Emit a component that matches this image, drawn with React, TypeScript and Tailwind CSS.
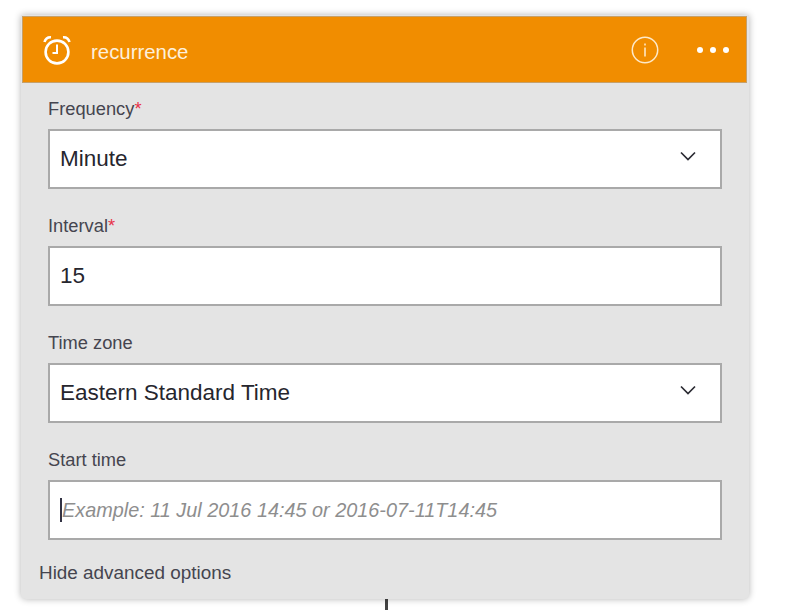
const ChevronDown = () => (
  <svg width="16" height="10" viewBox="0 0 16 10" fill="none" className="mr-[24px] mb-[6px]">
    <path d="M1 1.5 L8 8.5 L15 1.5" stroke="#2b2b33" strokeWidth="1.7" />
  </svg>
);

const Label = ({ text, required }: { text: string; required?: boolean }) => (
  <div className="h-[24px] text-[18.3px] leading-[24px] text-[#45454f]">
    {text}
    {required && <span className="text-[#e8334a]">*</span>}
  </div>
);

const fields = [
  { label: 'Frequency', required: true, value: 'Minute', select: true },
  { label: 'Interval', required: true, value: '15', select: false },
  { label: 'Time zone', required: false, value: 'Eastern Standard Time', select: true },
];

export default function App() {
  return (
    <div className="relative h-[610px] w-[794px] overflow-hidden bg-white font-['Liberation_Sans',sans-serif]">
      <div className="absolute left-[385px] top-[596px] h-[14px] w-[3px] bg-[#444444]" />
      <div className="absolute left-[21px] top-[15px] h-[584px] w-[728px] rounded-b-[5px] bg-[#e4e4e4] pt-[1px] shadow-[0_0_7px_rgba(0,0,0,0.3)]">
        <div className="ml-[1px] mr-[2px] flex h-[67px] items-center border border-[#c5a06b] bg-[#f18d00] pl-[19px] pr-[17px]">
          <svg width="30" height="32" viewBox="0 0 30 32" fill="none" stroke="white">
            <circle cx="15" cy="18" r="11.4" strokeWidth="2.6" />
            <path d="M15 10.5 V19 H10.5" strokeWidth="2" />
            <path d="M2.5 8 C3.5 4.5 6 3 9 3.2" strokeWidth="2.6" />
            <path d="M27.5 8 C26.5 4.5 24 3 21 3.2" strokeWidth="2.6" />
          </svg>
          <span className="ml-[19px] mt-[5px] text-[20.4px] text-[#fdf0dc]">recurrence</span>
          <svg width="28" height="28" viewBox="0 0 28 28" fill="none" className="ml-auto mt-[1px]">
            <circle cx="14" cy="14" r="12.7" stroke="#fde9c9" strokeWidth="1.5" />
            <rect x="13.1" y="11.5" width="1.8" height="9" fill="#fcdcae" />
            <rect x="13.1" y="7.5" width="1.8" height="2" fill="#fcdcae" />
          </svg>
          <div className="ml-[38px] mt-[1px] flex gap-[7px]">
            <span className="h-[6px] w-[6px] rounded-full bg-white" />
            <span className="h-[6px] w-[6px] rounded-full bg-white" />
            <span className="h-[6px] w-[6px] rounded-full bg-white" />
          </div>
        </div>
        <div className="flex flex-col pl-[27px] pr-[27px] pt-[14px]">
          {fields.map((f) => (
            <div key={f.label} className="h-[117px]">
              <Label text={f.label} required={f.required} />
              <div className="mt-[8px] flex h-[60px] items-center justify-between border-2 border-[#a9a9a9] bg-white pl-[10px] text-[22.5px] text-[#26262e]">
                {f.value}
                {f.select && <ChevronDown />}
              </div>
            </div>
          ))}
          <Label text="Start time" />
          <div className="mt-[8px] flex h-[60px] items-center border-2 border-[#a9a9a9] bg-white pl-[10px] text-[19.85px] italic text-[#8e8e8e]">
            <span className="h-[24px] w-[2px] bg-[#333344]" />
            <span className="mt-[2px]">Example: 11 Jul 2016 14:45 or 2016-07-11T14:45</span>
          </div>
        </div>
        <div className="mt-[21px] pl-[18px] text-[18.9px] leading-[24px] text-[#45454f]">Hide advanced options</div>
      </div>
    </div>
  );
}
